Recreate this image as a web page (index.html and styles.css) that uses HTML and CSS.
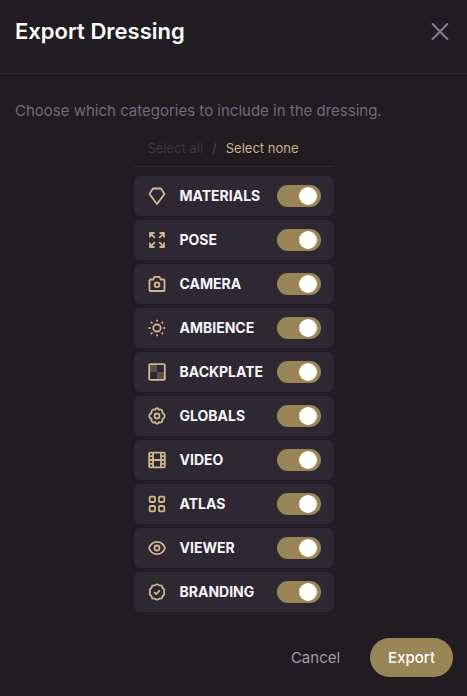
FILE: index.html
```html
<!DOCTYPE html>
<html lang="en">
<head>
    <meta charset="UTF-8">
    <meta name="viewport" content="width=device-width, initial-scale=1.0">
    <title>Export Dressing</title>
    <link rel="stylesheet" href="styles.css">
</head>
<body>

    <form class="dialog">
        <header class="dialog-header">
            <h1>Export Dressing</h1>
            <button type="button" class="close-button" aria-label="Close">
                <svg viewBox="0 0 18 18"><path d="M2 2l14 14M16 2L2 16"/></svg>
            </button>
        </header>

        <main class="dialog-body">
            <p class="description">Choose which categories to include in the dressing.</p>

            <div class="categories">
                <div class="select-bar">
                    <button type="button" class="select-button" id="selectAll" disabled>Select all</button>
                    <span class="divider">/</span>
                    <button type="button" class="select-button" id="selectNone">Select none</button>
                </div>

                <label class="category">
                    <svg class="icon" viewBox="0 0 18 18"><path d="M5 1.500h8l3.500 5.500L9 17 1.500 7z"/></svg>
                    <span class="name">Materials</span>
                    <input type="checkbox" class="toggle" checked>
                </label>

                <label class="category">
                    <svg class="icon" viewBox="0 0 18 18"><path d="M2 6.500V2h4.500M2 2l4.800 4.800M11.500 2H16v4.500M16 2l-4.800 4.800M2 11.500V16h4.500M2 16l4.800-4.800M16 11.500V16h-4.500M16 16l-4.800-4.800"/></svg>
                    <span class="name">Pose</span>
                    <input type="checkbox" class="toggle" checked>
                </label>

                <label class="category">
                    <svg class="icon" viewBox="0 0 18 18"><path d="M2.500 4.500h2.700l1.300-2.700h5l1.300 2.700h2.700a1 1 0 0 1 1 1v9.500a1 1 0 0 1-1 1h-13a1 1 0 0 1-1-1V5.500a1 1 0 0 1 1-1z"/><circle cx="9" cy="9.700" r="2.400"/></svg>
                    <span class="name">Camera</span>
                    <input type="checkbox" class="toggle" checked>
                </label>

                <label class="category">
                    <svg class="icon" viewBox="0 0 18 18"><circle cx="9" cy="9" r="3.700"/><path d="M9 .8v1.800M9 15.400v1.800M.8 9h1.800M15.400 9h1.800M3 3l1.300 1.300M13.700 13.700L15 15M3 15l1.300-1.300M13.700 4.300L15 3"/></svg>
                    <span class="name">Ambience</span>
                    <input type="checkbox" class="toggle" checked>
                </label>

                <label class="category">
                    <svg class="icon" viewBox="0 0 18 18"><path class="checker" d="M1.500 1.500H9V9H1.500zM9 9h7.500v7.500H9z"/><rect x="1.200" y="1.200" width="15.600" height="15.600" rx="1"/></svg>
                    <span class="name">Backplate</span>
                    <input type="checkbox" class="toggle" checked>
                </label>

                <label class="category">
                    <svg class="icon" viewBox="0 0 18 18"><path d="M9 1.200q1.300 0 1.700 1.700 1.700-1 3 .2 1.400 1.300.7 3 1.800.8 2 1.600.6 1.300 0 2.600-.2.800-2 1.600.7 1.700-.7 3-1.300 1.200-3 .2Q10.300 16.800 9 16.800t-1.700-1.700q-1.700 1-3-.2-1.400-1.300-.7-3-1.800-.8-2-1.600-.6-1.300 0-2.600.2-.8 2-1.600-.7-1.700.7-3 1.300-1.200 3-.2Q7.700 1.200 9 1.200z"/><circle cx="9" cy="9" r="2.500"/></svg>
                    <span class="name">Globals</span>
                    <input type="checkbox" class="toggle" checked>
                </label>

                <label class="category">
                    <svg class="icon" viewBox="0 0 18 18"><rect x="1.200" y="1.700" width="15.600" height="14.600" rx="1"/><path d="M5 1.500v15M13 1.500v15M5 9h8M1 5.200h4M1 9h4M1 12.800h4M13 5.200h4M13 9h4M13 12.800h4"/></svg>
                    <span class="name">Video</span>
                    <input type="checkbox" class="toggle" checked>
                </label>

                <label class="category">
                    <svg class="icon" viewBox="0 0 18 18"><rect x="1.700" y="1.700" width="5.300" height="5.300" rx="1"/><rect x="11" y="1.700" width="5.300" height="5.300" rx="1"/><rect x="1.700" y="11" width="5.300" height="5.300" rx="1"/><rect x="11" y="11" width="5.300" height="5.300" rx="1"/></svg>
                    <span class="name">Atlas</span>
                    <input type="checkbox" class="toggle" checked>
                </label>

                <label class="category">
                    <svg class="icon" viewBox="0 0 18 18"><path d="M1 9C2.500 5 5.500 2.800 9 2.800S15.500 5 17 9C15.500 13 12.500 15.200 9 15.200S2.500 13 1 9z"/><circle cx="9" cy="9" r="2.500"/></svg>
                    <span class="name">Viewer</span>
                    <input type="checkbox" class="toggle" checked>
                </label>

                <label class="category">
                    <svg class="icon" viewBox="0 0 18 18"><path d="M9 1.200l2.200 1.100 2.500.3.900 2.300 1.700 1.800L16 9l.3 2.300-1.700 1.800-.9 2.300-2.500.3L9 16.800l-2.200-1.100-2.500-.3-.9-2.300-1.700-1.800L2 9l-.3-2.300 1.700-1.800.9-2.300 2.500-.3z"/><path d="M6.200 9.200l2 1.900 3.600-3.700"/></svg>
                    <span class="name">Branding</span>
                    <input type="checkbox" class="toggle" checked>
                </label>
            </div>
        </main>

        <footer class="dialog-footer">
            <button type="button" class="button">Cancel</button>
            <button type="submit" class="button primary">Export</button>
        </footer>
    </form>

    <script src="script.js"></script>
</body>
</html>
```
FILE: styles.css
```css
* {
    box-sizing: border-box;
}

body {
    margin: 0;
    background-color: #211c22;
    color: #f7f5fa;
    font-family: Inter, "Liberation Sans", sans-serif;
}

button {
    padding: 0;
    border: none;
    background: none;
    font-family: inherit;
    cursor: pointer;
}

.dialog-header {
    display: flex;
    justify-content: space-between;
    align-items: center;
    padding: 17px 17px 27px 15px;
    border-bottom: 1px solid #302a33;
}

.dialog-header h1 {
    margin: 0;
    color: #fff;
    font-size: 22px;
    line-height: 29px;
    font-weight: 600;
}

.close-button svg {
    display: block;
    width: 20px;
    height: 19px;
    fill: none;
    stroke: #85798b;
    stroke-width: 2;
    stroke-linecap: round;
}

.dialog-body {
    padding: 25px 15px 0;
}

.description {
    margin: 0;
    color: #72697a;
    font-size: 15px;
    line-height: 24px;
}

.categories {
    display: flex;
    flex-direction: column;
    gap: 4px;
    width: 200px;
    margin: 7px auto 0;
}

.select-bar {
    display: flex;
    gap: 9px;
    margin-bottom: 5px;
    padding: 8px 0 8px 14px;
    border-bottom: 1px solid #302a33;
    font-size: 13px;
    line-height: 20px;
}

.select-button {
    color: #c8b084;
    font-size: 13px;
    line-height: 20px;
}

.select-button:disabled {
    color: #3d3542;
    cursor: default;
}

.divider {
    color: #4a414f;
}

.category {
    display: flex;
    align-items: center;
    height: 40px;
    padding: 0 13px 0 14px;
    border-radius: 6px;
    background-color: #2e2832;
    cursor: pointer;
}

.icon {
    width: 18px;
    height: 18px;
    fill: none;
    stroke: #cfb991;
    stroke-width: 1.8;
    stroke-linejoin: round;
}

.icon .checker {
    fill: #5c5148;
    stroke: none;
}

.name {
    flex: 1;
    margin-left: 14px;
    font-size: 14px;
    line-height: 18px;
    font-weight: 700;
    text-transform: uppercase;
}

.toggle {
    appearance: none;
    display: flex;
    align-items: center;
    width: 44px;
    height: 22px;
    margin: 0;
    padding: 0 4px;
    border-radius: 11px;
    background-color: #4a414f;
    cursor: pointer;
}

.toggle::before {
    content: "";
    width: 18px;
    height: 18px;
    border-radius: 50%;
    background-color: #fff;
}

.toggle:checked {
    justify-content: flex-end;
    background-color: #998555;
}

.dialog-footer {
    display: flex;
    justify-content: flex-end;
    gap: 12px;
    padding: 26px 14px 19px;
}

.button {
    padding: 0 18px;
    border-radius: 20px;
    color: #a49aaa;
    font-size: 15px;
    line-height: 39px;
}

.primary {
    background-color: #998555;
    color: #fff;
    font-weight: 500;
}
```
FILE: script.js
```js
const toggles = document.querySelectorAll(".toggle");
const selectAll = document.getElementById("selectAll");
const selectNone = document.getElementById("selectNone");

function updateButtons() {
    const checked = document.querySelectorAll(".toggle:checked").length;
    selectAll.disabled = checked === toggles.length;
    selectNone.disabled = checked === 0;
}

function setAll(value) {
    toggles.forEach(toggle => {
        toggle.checked = value;
    });
    updateButtons();
}

selectAll.onclick = () => setAll(true);
selectNone.onclick = () => setAll(false);
toggles.forEach(toggle => {
    toggle.onchange = updateButtons;
});
```
